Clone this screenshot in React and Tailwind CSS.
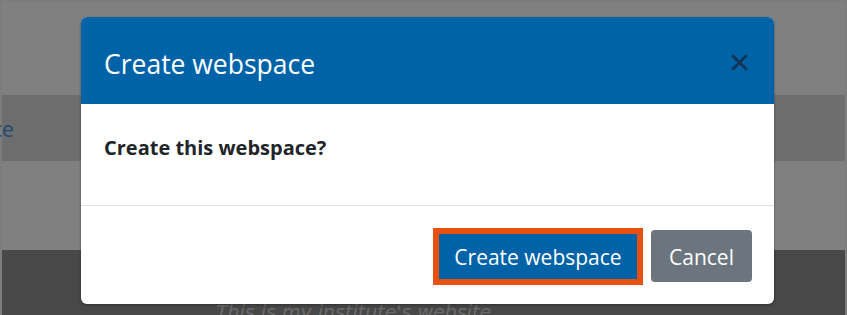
export default function App() {
  const font = { fontFamily: '"Open Sans", "Noto Sans", sans-serif' };
  return (
    <div className="relative w-[847px] h-[315px] overflow-hidden bg-[#7d7d7d] p-[2px]" style={font}>
      <div className="flex flex-col w-full h-full bg-[#808080]">
        <div className="h-[93px] shrink-0" />
        <div className="h-[66px] shrink-0 bg-[#6e6e6e] flex items-center">
          <span className="text-[21px] text-[#1c4a73] -ml-[10px] mt-[3px]">ce</span>
        </div>
        <div className="h-[89px] shrink-0" />
        <div className="flex-1 bg-[#484848] flex justify-center">
          <span className="italic text-[19px] leading-none text-[#6a6a6a] mt-[53px] -ml-[140px] whitespace-nowrap" style={{ fontFamily: '"DejaVu Sans", sans-serif' }}>
            This is my institute's website
          </span>
        </div>
      </div>

      <div className="absolute left-[81px] top-[17px] w-[693px] h-[287px] bg-white rounded-[6px] overflow-hidden shadow-[0_1px_3px_rgba(0,0,0,0.35)] flex flex-col">
        <div className="h-[87px] shrink-0 bg-[#0063a8] flex items-center justify-between pl-[23px] pr-[26px]">
          <h1 className="text-[26.5px] text-white leading-none mt-[8px]">Create webspace</h1>
          <svg width="17" height="17" viewBox="0 0 17 17" className="mt-[3px]">
            <path d="M2 2 L15 15 M15 2 L2 15" stroke="#123352" strokeWidth="2.8" strokeLinecap="round" />
          </svg>
        </div>
        <div className="h-[102px] shrink-0 border-b border-[#dee2e6] pl-[23px] pt-[34px]">
          <p className="text-[20px] font-bold text-[#212529] leading-none">Create this webspace?</p>
        </div>
        <div className="flex-1 flex items-center justify-end pr-[22px] gap-[8px] pt-[2px]">
          <button className="w-[210px] h-[57px] border-[6px] border-[#e8500f] bg-[#0063a8] text-white text-[21px] flex items-center justify-center pt-[3px]">
            Create webspace
          </button>
          <button className="w-[101px] h-[52px] rounded-[4px] bg-[#6c757d] text-white text-[21px] flex items-center justify-center pt-[3px]">
            Cancel
          </button>
        </div>
      </div>
    </div>
  );
}
